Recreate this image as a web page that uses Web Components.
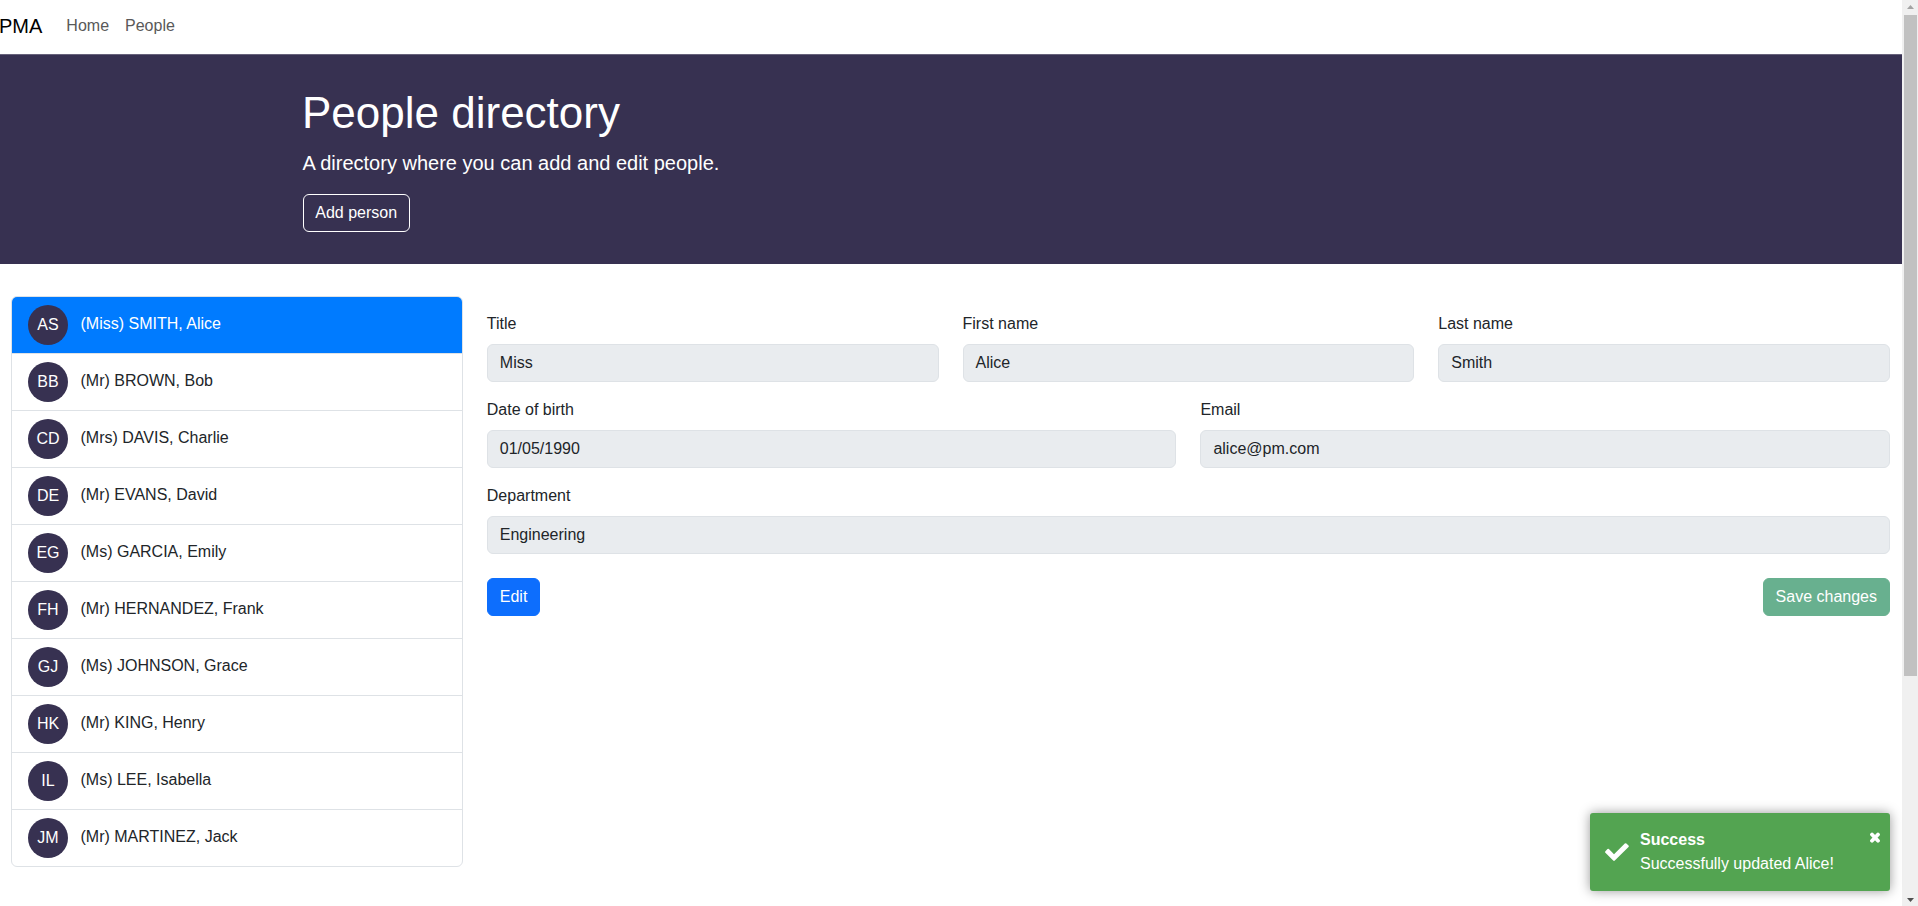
<!DOCTYPE html>
<html lang="en">
<head>
<meta charset="utf-8">
<title>PMA - People directory</title>
<style>
html, body { margin: 0; height: 100%; overflow: hidden; background: #fff; }
body { font: 16px/24px "Liberation Sans", Arial, sans-serif; color: #212529; }
</style>
</head>
<body>
<pma-app></pma-app>
<script>
function define(name, html, setup) {
  const template = document.createElement('template');
  template.innerHTML = '<style>*{box-sizing:border-box}</style>' + html;
  customElements.define(name, class extends HTMLElement {
    constructor() {
      super();
      this.attachShadow({ mode: 'open' }).append(template.content.cloneNode(true));
    }
    connectedCallback() { if (setup) setup(this, this.shadowRoot); }
  });
}

define('pma-navbar', `
<style>
:host { display: flex; align-items: center; height: 54px; padding-bottom: 3px; box-sizing: border-box; }
.brand { font-size: 20px; line-height: 30px; color: #000; margin: 0 24px 0 -1px; }
nav { display: flex; gap: 16px; padding-top: 1px; }
a { color: #595959; }
</style>
<span class="brand">PMA</span><nav><a>Home</a><a>People</a></nav>`);

define('pma-button', `
<style>
:host { display: inline-block; }
button { display: block; height: 38px; padding: 6px 11.3px 6px 12px; border: 1px solid #0d6efd; border-radius: 6px; background: #0d6efd; color: #fff; font: inherit; white-space: nowrap; }
:host([variant="outline"]) button { background: transparent; border-color: #fff; padding: 6px 12.2px 6px 11.3px; }
:host([variant="success"]) button { background: #198754; border-color: #198754; opacity: .65; padding: 6px 12px 6px 11.4px; }
</style>
<button><slot></slot></button>`);

define('pma-hero', `
<style>
:host { display: block; height: 210px; box-sizing: border-box; background: #373151; border-top: 1px solid #67627b; color: #fff; padding-top: 31px; }
.container { width: 1296px; margin: 0 auto; }
h1 { font-size: 44px; font-weight: 400; line-height: 53px; margin: 0 0 9px -1px; }
p { font-size: 20px; line-height: 30px; margin: 0 0 16px -.6px; }
</style>
<div class="container">
<h1>People directory</h1>
<p>A directory where you can add and edit people.</p>
<pma-button variant="outline">Add person</pma-button>
</div>`);

define('pma-person', `
<style>
:host { display: flex; height: 57px; box-sizing: border-box; padding: 8px 16px; gap: 12.5px; border-bottom: 1px solid #dee2e6; }
:host(:last-of-type) { border-bottom: 0; height: 56px; }
:host([active]) { background: #007bff; color: #fff; }
.avatar { width: 40px; height: 40px; border-radius: 50%; background: #373151; color: #fff; text-align: center; line-height: 40px; }
.name { line-height: 38px; }
</style>
<span class="avatar"></span><span class="name"><slot></slot></span>`,
(host, root) => { root.querySelector('.avatar').textContent = host.getAttribute('initials'); });

define('pma-list', `
<style>
:host { display: block; width: 451.8px; flex: none; box-sizing: border-box; border: 1px solid #dee2e6; border-radius: 6px; overflow: hidden; }
</style>
<slot></slot>`);

define('pma-field', `
<style>
:host { display: block; flex: 1 1 0; min-width: 0; }
label { display: block; margin-bottom: 8px; }
.control { height: 38px; padding: 6px 12px; border: 1px solid #dee2e6; border-radius: 6px; background: #e9ecef; }
</style>
<label></label><div class="control"><slot></slot></div>`,
(host, root) => { root.querySelector('label').textContent = host.getAttribute('label'); });

define('pma-form', `
<style>
:host { display: flex; flex-direction: column; gap: 16px; flex: 1; padding-top: 16px; }
.row { display: flex; gap: 24px; }
.actions { display: flex; justify-content: space-between; margin-top: 8px; }
</style>
<div class="row"><pma-field label="Title">Miss</pma-field><pma-field label="First name">Alice</pma-field><pma-field label="Last name">Smith</pma-field></div>
<div class="row"><pma-field label="Date of birth">01/05/1990</pma-field><pma-field label="Email">alice@pm.com</pma-field></div>
<div class="row"><pma-field label="Department">Engineering</pma-field></div>
<div class="actions"><pma-button>Edit</pma-button><pma-button variant="success">Save changes</pma-button></div>`);

define('pma-toast', `
<style>
:host { position: absolute; right: 28px; bottom: 15px; display: flex; width: 300px; height: 78px; box-sizing: border-box; padding: 15px 9px 15px 15px; background: #53a451; color: #fff; border-radius: 3px; box-shadow: 0 0 12px #999; }
.check { width: 24px; height: 18px; margin: 15px 11px 0 0; }
.text { flex: 1; }
b, span { display: block; }
.close { width: 12px; height: 12px; margin-top: 4px; }
</style>
<svg class="check" viewBox="0 0 24 18"><path d="M0.4 8.2 2.5 6.1Q3.2 5.5 3.9 6.1L9 11.2 19.8 0.5Q20.6-.2 21.4.5L23.5 2.6Q24.2 3.3 23.5 4L9.8 17.6Q9 18.3 8.2 17.6L0.4 9.8Q-.3 9 .4 8.2Z" fill="#fff"/></svg>
<div class="text"><b>Success</b><span>Successfully updated Alice!</span></div>
<svg class="close" viewBox="0 0 12 12"><path d="M3 2.5 9 8.7M9 2.5 3 8.7" stroke="#fff" stroke-width="3.8" stroke-linecap="round"/></svg>`);

define('pma-scrollbar', `
<style>
:host { display: flex; flex-direction: column; width: 16px; height: 906px; background: #f0f0f0; box-sizing: border-box; }
.thumb { width: 13px; height: 661px; margin-left: 2px; background: #c1c1c1; }
svg { display: block; width: 16px; height: 15px; }
.down { margin-top: auto; }
</style>
<svg viewBox="0 0 16 15"><path d="M5 9 8.5 5 12 9Z" fill="#a3a3a3"/></svg>
<div class="thumb"></div>
<svg class="down" viewBox="0 0 16 15"><path d="M5 7 8.5 11 12 7Z" fill="#505050"/></svg>`);

define('pma-app', `
<style>
:host { display: flex; height: 906px; position: relative; }
.page { flex: 1; min-width: 0; }
main { display: flex; align-items: flex-start; gap: 24px; padding: 32px 12px 0 11px; }
</style>
<div class="page">
<pma-navbar></pma-navbar>
<pma-hero></pma-hero>
<main>
<pma-list>
<pma-person initials="AS" active>(Miss) SMITH, Alice</pma-person>
<pma-person initials="BB">(Mr) BROWN, Bob</pma-person>
<pma-person initials="CD">(Mrs) DAVIS, Charlie</pma-person>
<pma-person initials="DE">(Mr) EVANS, David</pma-person>
<pma-person initials="EG">(Ms) GARCIA, Emily</pma-person>
<pma-person initials="FH">(Mr) HERNANDEZ, Frank</pma-person>
<pma-person initials="GJ">(Ms) JOHNSON, Grace</pma-person>
<pma-person initials="HK">(Mr) KING, Henry</pma-person>
<pma-person initials="IL">(Ms) LEE, Isabella</pma-person>
<pma-person initials="JM">(Mr) MARTINEZ, Jack</pma-person>
</pma-list>
<pma-form></pma-form>
</main>
</div>
<pma-scrollbar></pma-scrollbar>
<pma-toast></pma-toast>`);
</script>
</body>
</html>
